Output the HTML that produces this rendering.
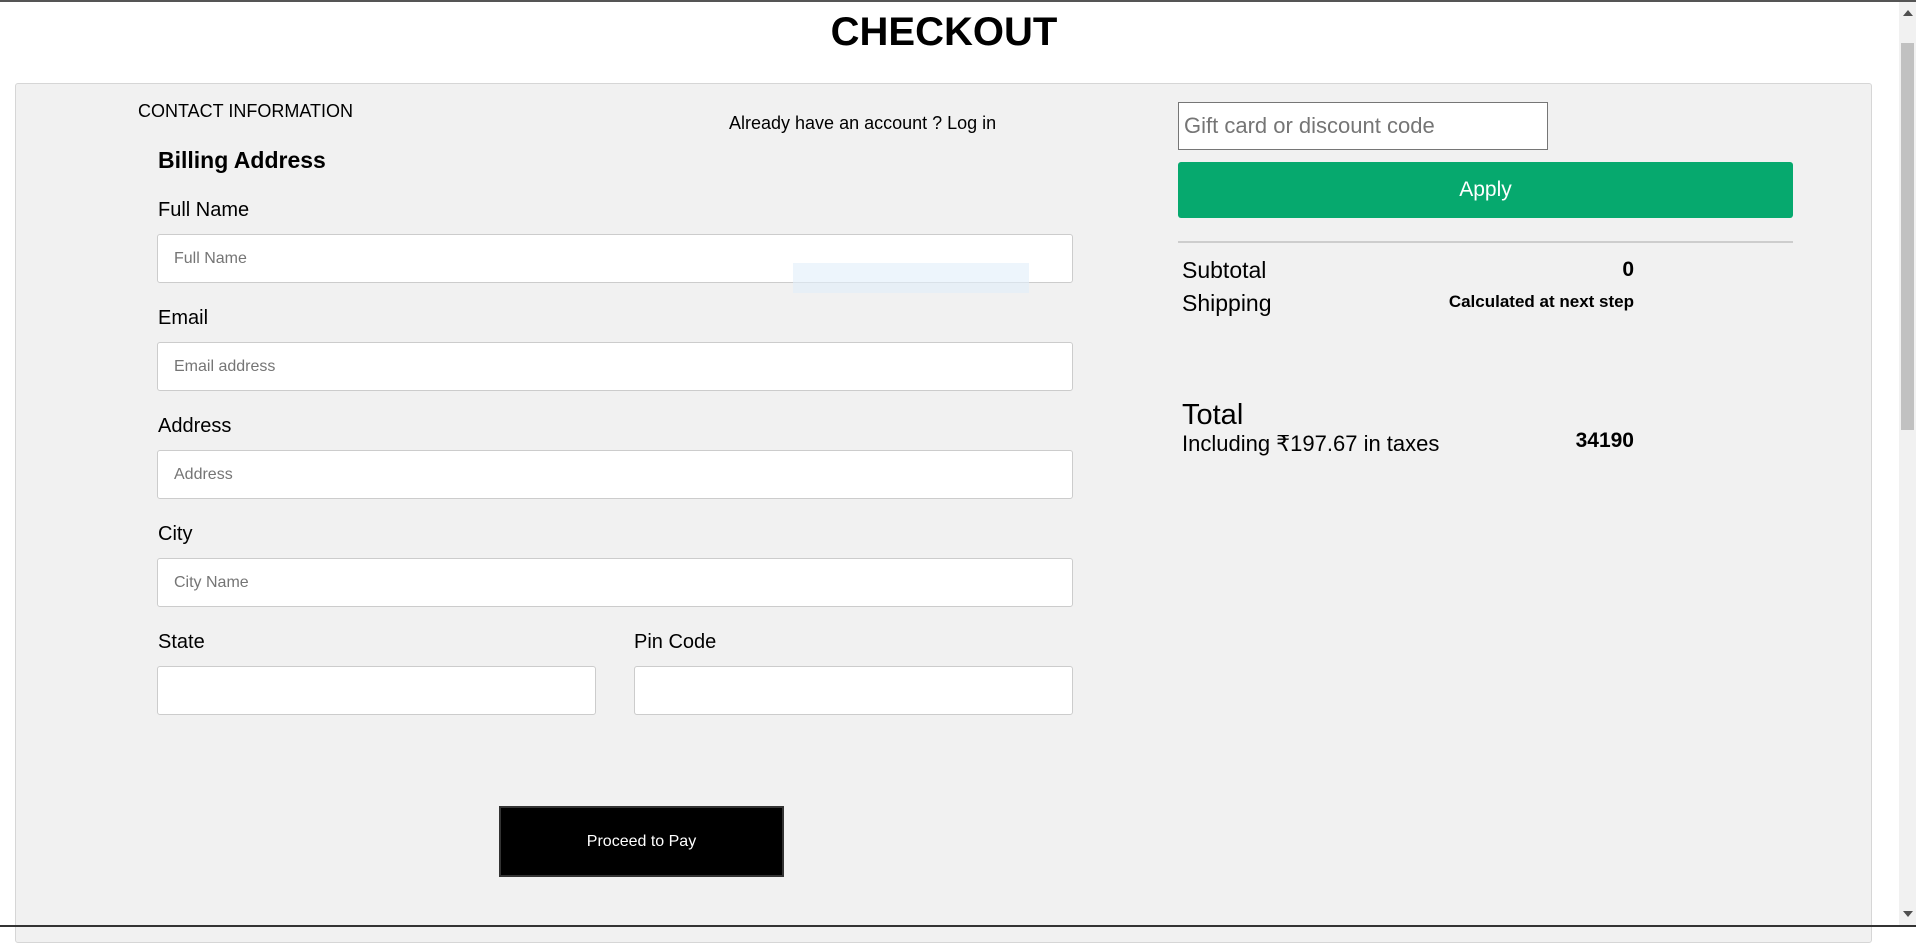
<!DOCTYPE html>
<html><head><meta charset="utf-8"><style>
*{box-sizing:border-box;margin:0;padding:0}
body{width:1916px;height:927px;background:#fff;font-family:"Liberation Sans",Arial,sans-serif;position:relative;overflow:hidden;color:#000}
.a{position:absolute;white-space:nowrap}
.inp{position:absolute;background:#fff;border:1px solid #ccc;border-radius:3px;height:49px;font-size:16px;color:#757575;padding-left:16px;line-height:47px}
.lbl{position:absolute;font-size:20px;left:158px;line-height:22px}
</style></head><body>
<div class="a" style="left:0;top:0;width:1916px;height:2px;background:#555"></div>
<div class="a" style="left:0;top:12px;width:1888px;text-align:center;font-size:40px;font-weight:bold;line-height:40px">CHECKOUT</div>
<div class="a" style="left:15px;top:83px;width:1857px;height:860px;background:#f1f1f1;border:1px solid #d6d6d6;border-radius:3px"></div>
<div class="a" style="left:138px;top:100px;font-size:18px;line-height:22px">CONTACT INFORMATION</div>
<div class="a" style="left:729px;top:112px;font-size:18px;line-height:22px">Already have an account ? Log in</div>
<div class="a" style="left:158px;top:147px;font-size:23px;font-weight:bold;line-height:26px">Billing Address</div>
<div class="lbl" style="top:199px">Full Name</div>
<div class="inp" style="left:157px;top:234px;width:916px">Full Name</div>
<div class="a" style="left:793px;top:263px;width:236px;height:30px;background:rgba(225,238,250,.6)"></div>
<div class="lbl" style="top:307px">Email</div>
<div class="inp" style="left:157px;top:342px;width:916px">Email address</div>
<div class="lbl" style="top:415px">Address</div>
<div class="inp" style="left:157px;top:450px;width:916px">Address</div>
<div class="lbl" style="top:523px">City</div>
<div class="inp" style="left:157px;top:558px;width:916px">City Name</div>
<div class="lbl" style="top:631px">State</div>
<div class="lbl" style="top:631px;left:634px">Pin Code</div>
<div class="inp" style="left:157px;top:666px;width:439px"></div>
<div class="inp" style="left:634px;top:666px;width:439px"></div>
<div class="a" style="left:499px;top:806px;width:285px;height:71px;background:#000;border:2px solid #333;color:#fff;font-size:16px;text-align:center;line-height:67px">Proceed to Pay</div>
<div class="a" style="left:1178px;top:102px;width:370px;height:48px;background:#fff;border:1px solid #767676;font-size:22px;color:#757575;padding-left:5px;line-height:46px">Gift card or discount code</div>
<div class="a" style="left:1178px;top:162px;width:615px;height:56px;background:#06a96e;border-radius:3px;color:#fff;font-size:21px;text-align:center;line-height:56px">Apply</div>
<div class="a" style="left:1178px;top:241px;width:615px;height:2px;background:#cdcdcd"></div>
<div class="a" style="left:1182px;top:257px;font-size:23px;line-height:26px">Subtotal</div>
<div class="a" style="left:1400px;width:234px;text-align:right;top:258px;font-size:21px;font-weight:bold;line-height:24px">0</div>
<div class="a" style="left:1182px;top:290px;font-size:23px;line-height:26px">Shipping</div>
<div class="a" style="left:1400px;width:234px;text-align:right;top:292px;font-size:17px;font-weight:bold;line-height:20px">Calculated at next step</div>
<div class="a" style="left:1182px;top:398px;font-size:29px;line-height:34px">Total</div>
<div class="a" style="left:1182px;top:431px;font-size:22px;line-height:26px">Including ₹197.67 in taxes</div>
<div class="a" style="left:1400px;width:234px;text-align:right;top:429px;font-size:21px;font-weight:bold;line-height:24px">34190</div>
<div class="a" style="left:1899px;top:2px;width:17px;height:925px;background:#f1f1f1"></div>
<div class="a" style="left:1901px;top:43px;width:13px;height:387px;background:#c1c1c1"></div>
<div class="a" style="left:1903px;top:10px;width:0;height:0;border-left:5px solid transparent;border-right:5px solid transparent;border-bottom:6px solid #505050"></div>
<div class="a" style="left:1903px;top:911px;width:0;height:0;border-left:5px solid transparent;border-right:5px solid transparent;border-top:6px solid #505050"></div>
<div class="a" style="left:0;top:925px;width:1916px;height:2px;background:#333"></div>
</body></html>
